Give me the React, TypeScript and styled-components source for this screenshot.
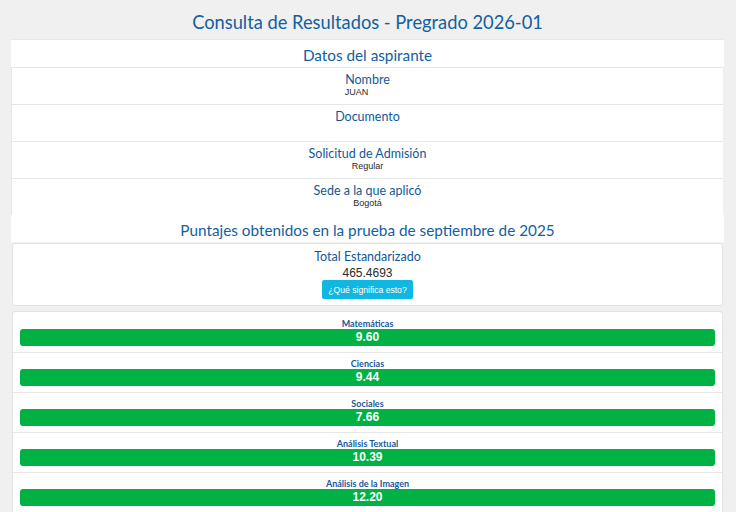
import React from "react";
import styled, { createGlobalStyle } from "styled-components";

const Global = createGlobalStyle`
  html, body { margin: 0; padding: 0; background: #f0f0f0; overflow: hidden; }
  body { font-family: Lato, "Open Sans", sans-serif; }
`;

const Page = styled.div`
  width: 713px;
  margin: 0 12px 0 11px;
`;

const Title = styled.h1`
  margin: 0;
  padding-top: 10px;
  height: 29px;
  font-family: Lato, sans-serif;
  font-weight: 400;
  font-size: 18.3px;
  line-height: 24px;
  text-align: center;
  color: #12609f;
  border-bottom: 1px dotted #e2e2e2;
`;

const SectionHeader = styled.h2`
  margin: 0;
  background: #fff;
  height: 27px;
  font-family: Lato, sans-serif;
  font-weight: 400;
  font-size: 15.3px;
  line-height: 30px;
  text-align: center;
  color: #12609f;
`;

const InfoList = styled.div`
  margin: 0 1px;
  background: #fff;
  box-shadow: -1px 0 0 #e6e6e6;
`;

const InfoRow = styled.div`
  border-top: 1px solid #e6e6e6;
  padding: 5px 0 7px;
  height: 24px;
  text-align: center;
`;

const Label = styled.div`
  font-family: Lato, sans-serif;
  font-size: 12.5px;
  line-height: 14px;
  color: #115996;
`;

const Value = styled.div<{ $size?: number }>`
  font-family: "Liberation Sans", Arial, sans-serif;
  font-size: ${(p) => p.$size ?? 9}px;
  line-height: ${(p) => (p.$size ? p.$size + 2 : 10)}px;
  margin-top: ${(p) => (p.$size ? 2 : 0)}px;
  color: #2a2a2a;
`;

const Trailing = styled.span`
  display: inline-block;
  width: 22px;
`;

const Box = styled.div`
  margin: 0 1px;
  background: #fff;
  border: 1px solid #e3e3e3;
  border-radius: 3px;
`;

const TotalBox = styled(Box)`
  margin-top: 1px;
  padding: 6px 0 6px;
  text-align: center;
`;

const InfoButton = styled.button`
  display: block;
  margin: 0 auto;
  height: 19px;
  padding: 0 6px;
  border: none;
  border-radius: 2px;
  background: #10b7e2;
  color: #fff;
  font-family: "Liberation Sans", Arial, sans-serif;
  font-size: 8.6px;
  cursor: pointer;
`;

const ScoreBox = styled(Box)`
  margin-top: 5px;
  border-radius: 3px 3px 0 0;
  border-bottom: none;
`;

const ScoreItem = styled.div`
  padding: 5px 7px 6px;
  text-align: center;
  &:first-child { padding-top: 6px; }
  & + & { border-top: 1px solid #e8e8e8; }
`;

const Subject = styled.div`
  font-family: Lato, sans-serif;
  font-weight: 700;
  font-size: 9px;
  line-height: 11px;
  color: #17589a;
`;

const Bar = styled.div`
  height: 17px;
  border-radius: 3px;
  background: #00b144;
  color: #fff;
  font-family: "Liberation Sans", Arial, sans-serif;
  font-weight: 700;
  font-size: 12px;
  line-height: 17px;
  text-align: center;
`;

const info = [
  { label: "Nombre", value: "JUAN", trailing: true },
  { label: "Documento", value: "" },
  { label: "Solicitud de Admisión", value: "Regular" },
  { label: "Sede a la que aplicó", value: "Bogotá" },
];

const scores = [
  { label: "Matemáticas", value: "9.60" },
  { label: "Ciencias", value: "9.44" },
  { label: "Sociales", value: "7.66" },
  { label: "Análisis Textual", value: "10.39" },
  { label: "Análisis de la Imagen", value: "12.20" },
];

export default function App() {
  return (
    <>
      <Global />
      <Page>
        <Title>Consulta de Resultados - Pregrado 2026-01</Title>
        <SectionHeader>Datos del aspirante</SectionHeader>
        <InfoList>
          {info.map((r) => (
            <InfoRow key={r.label}>
              <Label>{r.label}</Label>
              <Value>
                {r.value}
                {r.trailing && <Trailing />}
              </Value>
            </InfoRow>
          ))}
        </InfoList>
        <SectionHeader>Puntajes obtenidos en la prueba de septiembre de 2025</SectionHeader>
        <TotalBox>
          <Label>Total Estandarizado</Label>
          <Value $size={12}>465.4693</Value>
          <InfoButton>¿Qué significa esto?</InfoButton>
        </TotalBox>
        <ScoreBox>
          {scores.map((s) => (
            <ScoreItem key={s.label}>
              <Subject>{s.label}</Subject>
              <Bar>{s.value}</Bar>
            </ScoreItem>
          ))}
        </ScoreBox>
      </Page>
    </>
  );
}
